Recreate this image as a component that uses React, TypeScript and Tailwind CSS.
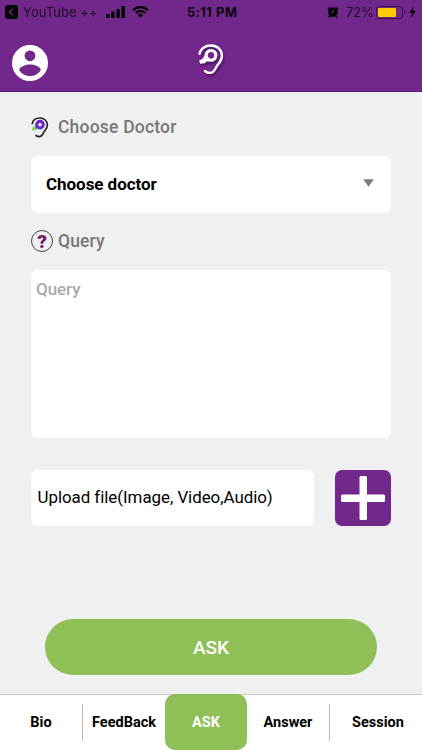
import { clsx } from "clsx";

const tabs = [
  { label: "Bio", width: "w-[82px]" },
  { label: "FeedBack", width: "w-[83px]", divider: true },
  { label: "ASK", width: "w-[82px]", active: true },
  { label: "Answer", width: "w-[82px]" },
  { label: "Session", width: "w-[93px]", divider: true, pad: "pl-1" },
];

function EarIcon({ colored = false, className }: { colored?: boolean; className?: string }) {
  const line = colored ? "#222" : "#fff";
  return (
    <svg viewBox="0 0 25 30" fill="none" className={className}>
      <path
        d="M1.4 9.6C2.3 4.5 7 1.5 12.5 1.5c6 0 10.6 4.2 10.6 10 0 5-3.4 7.3-5.3 10.5-1.3 2.4-2.6 6-6.3 6-2 0-3.7-.6-4.8-1.8"
        stroke={line}
        strokeWidth="2.3"
        strokeLinecap="round"
      />
      <path d="M7.4 9.5 4.6 14 1 16.2l1 3 4.4-.6 2-1.6 5.4-.8z" fill={colored ? "#22c5d8" : "#fff"} />
      {colored && <path d="M.8 15.2l3.4-1.4 1.8 4.2-4 1.6z" fill="#a6dc1e" />}
      <circle cx="12.5" cy="11" r="4.6" stroke={colored ? "#6d28c9" : "#fff"} strokeWidth={colored ? 4.6 : 3.2} />
      <circle cx="12.5" cy="11" r={colored ? 2.3 : 3} fill={colored ? "#f0f0f0" : "#72278a"} />
    </svg>
  );
}

function StatusBar() {
  return (
    <div className="flex h-6 items-center pr-1.5 pl-[5px] font-['Inter','Liberation_Sans',sans-serif] text-[13px] text-black">
      <div className="flex w-[182px] items-center">
        <svg viewBox="0 0 13 14" className="h-3.5 w-[13px]">
          <rect width="13" height="14" rx="3" />
          <path d="M8 3.8 4.3 7 8 10.2" fill="none" stroke="#72278a" strokeWidth="1.3" />
        </svg>
        <span className="ml-[5px] w-[75px] pt-px text-[13px] tracking-[0.05px] whitespace-nowrap opacity-75">YouTube ++</span>
        <svg viewBox="0 0 19 12" className="ml-2 h-3 w-[19px]">
          <rect y="8" width="3.4" height="4" rx=".8" />
          <rect x="5.2" y="5.6" width="3.4" height="6.4" rx=".8" />
          <rect x="10.4" y="3" width="3.4" height="9" rx=".8" />
          <rect x="15.5" width="3.4" height="12" rx=".8" />
        </svg>
        <svg viewBox="0 0 17 12" className="ml-[7px] h-3 w-[17px]" fill="none" stroke="#000" strokeWidth="2.1">
          <path d="M1 4.2a10.7 10.7 0 0 1 15 0M3.7 7a6.8 6.8 0 0 1 9.6 0" />
          <path d="m5.9 8.9 2.6 2.9 2.6-2.9a3.6 3.6 0 0 0-5.2 0z" fill="#000" stroke="none" />
        </svg>
      </div>
      <span className="w-[52px] pt-0.5 font-semibold tracking-[0.5px] whitespace-nowrap">5:11 PM</span>
      <div className="ml-auto flex items-center">
        <svg viewBox="0 0 12 12" className="h-3 w-3">
          <circle cx="6" cy="6.4" r="4.8" />
          <path d="M.9 3.5 3.4 1M11.1 3.5 8.6 1M2.8 10.2 1.8 11.5M9.2 10.2l1 1.3" stroke="#000" strokeWidth="1.5" />
          <path d="M6 3.5v3.2H4" fill="none" stroke="#72278a" />
        </svg>
        <span className="ml-[7px] w-[27px] pt-0.5 tracking-[-0.2px] whitespace-nowrap opacity-75">72%</span>
        <div className="ml-[3px] h-[13px] w-[27px] rounded-[3px] border border-black/50 p-px">
          <div className="h-full w-[18px] rounded-[1px] bg-[#ffca00]" />
        </div>
        <div className="ml-px h-1 w-px rounded-r bg-black/50" />
        <svg viewBox="0 0 7 12" className="ml-1 h-3 w-[7px]">
          <path d="M4.7.6.3 6.8h2.6l-.9 4.6L6.7 5H4z" />
        </svg>
      </div>
    </div>
  );
}

function Header() {
  return (
    <header className="h-[92px] border-b border-[#5f1878] bg-[#72278a]">
      <StatusBar />
      <div className="flex items-start pt-[18px] pl-3">
        <svg viewBox="2 2 20 20" className="mt-[3px] h-9 w-9" fill="#fff">
          <path d="M12 2a10 10 0 1 0 0 20 10 10 0 0 0 0-20zm0 3a3 3 0 1 1 0 6 3 3 0 0 1 0-6zm0 14.2A7.2 7.2 0 0 1 6 16c.03-2 4-3.1 6-3.1s5.97 1.1 6 3.1a7.2 7.2 0 0 1-6 3.2z" />
        </svg>
        <EarIcon className="mt-0.5 ml-[150px] h-[31px] w-[26px] drop-shadow-[1px_2px_1px_rgba(40,0,60,0.5)]" />
      </div>
    </header>
  );
}

function TabBar() {
  return (
    <nav className="flex h-14 border-t border-[#c8c8c8] bg-white">
      {tabs.map((tab) => (
        <div
          key={tab.label}
          className={clsx(
            "flex shrink-0 items-center justify-center text-[14.5px] font-bold",
            tab.width,
            tab.active && "-mt-px h-14 rounded-[10px] bg-[#8fc058] pt-0.5 text-white"
          )}
        >
          {tab.divider && <span className="h-[37px] w-px shrink-0 bg-[#b5b5b5]" />}
          <span className={clsx("flex-1 text-center", tab.pad)}>{tab.label}</span>
        </div>
      ))}
    </nav>
  );
}

export default function App() {
  return (
    <div className="flex h-[750px] w-[422px] flex-col overflow-hidden bg-[#f0f0f0] font-['Roboto','Liberation_Sans',sans-serif] text-black">
      <Header />
      <main className="flex flex-1 flex-col px-[31px]">
        <div className="mt-[23px] flex h-6 items-center">
          <EarIcon colored className="h-[21px] w-[18px]" />
          <h2 className="ml-[9px] text-[17.5px] font-medium tracking-[0.2px] text-[#777]">Choose Doctor</h2>
        </div>
        <button className="mt-[17px] flex h-[57px] w-[360px] items-center justify-between rounded-[7px] bg-white pr-[17px] pl-[15px]">
          <span className="text-[17px] font-bold tracking-[-0.05px]">Choose doctor</span>
          <svg viewBox="0 0 11 8" className="mb-1 h-2 w-[11px]">
            <path d="M.2.2h10.6L5.5 7.8z" fill="#7d7d7d" />
          </svg>
        </button>
        <div className="mt-4 flex h-6 items-center">
          <div className="flex h-[22px] w-[22px] items-center justify-center rounded-full border border-[#444] text-[19px] leading-none font-black text-[#751465]">
            ?
          </div>
          <h2 className="ml-[5px] text-[17.5px] font-medium tracking-[0.1px] text-[#777]">Query</h2>
        </div>
        <textarea
          placeholder="Query"
          className="mt-[17px] block h-[168px] w-[360px] shrink-0 resize-none rounded-[7px] bg-white px-[5px] py-[7px] text-[17px] font-medium tracking-[-0.05px] outline-none placeholder:text-[#aaa]"
        />
        <div className="mt-8 flex h-14 shrink-0 justify-between">
          <div className="flex w-[283px] items-center rounded-[7px] bg-white pl-[6.5px] text-[16.9px] tracking-[-0.03px]">
            Upload file(Image, Video,Audio)
          </div>
          <button className="flex w-14 items-center justify-center rounded-[7px] bg-[#72278a]">
            <svg viewBox="0 0 44 44" className="h-11 w-11" fill="#fff">
              <rect x="18.5" width="7.5" height="44" rx="1.5" />
              <rect y="18.5" width="44" height="7.5" rx="1.5" />
            </svg>
          </button>
        </div>
        <button className="mx-[14px] mt-[93px] h-14 shrink-0 rounded-full bg-[#8fc058] pt-0.5 text-[19px] font-medium text-white">
          ASK
        </button>
      </main>
      <TabBar />
    </div>
  );
}
